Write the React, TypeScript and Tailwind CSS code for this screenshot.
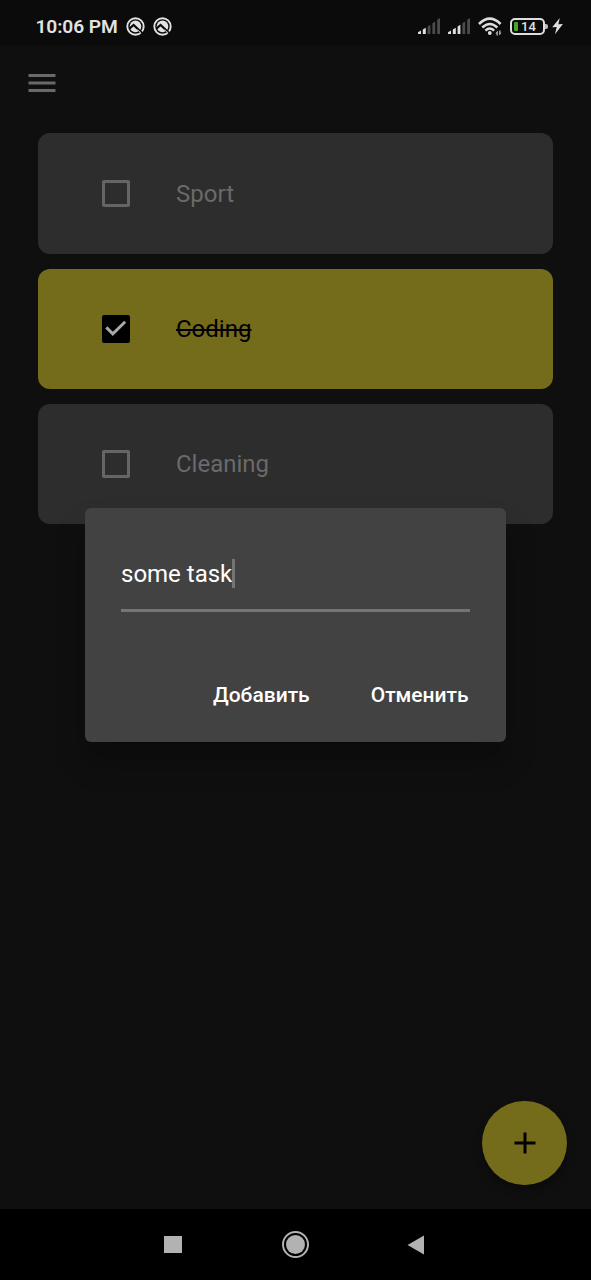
import React from 'react';

function RotationBadge() {
  return (
    <svg className="h-[19px] w-[19px]" viewBox="0 0 19 19" fill="none">
      <circle cx="9.5" cy="9.5" r="8.2" stroke="#e2e2e2" strokeWidth="1.9" />
      <circle cx="9.5" cy="9.4" r="5.8" fill="#e2e2e2" />
      <path d="M3.4 11.6L7.6 8L17.2 17" stroke="#0b0b0b" strokeWidth="2.2" />
      <path d="M11.4 12.6L15.2 16" stroke="#e2e2e2" strokeWidth="0.8" />
    </svg>
  );
}

function Signal({ active }: { active: number }) {
  const bars = [
    'M0 16V14.2L3 12.6V16Z',
    'M4.8 16V11.4L7.8 9.8V16Z',
    'M9.6 16V8.4L12.4 6.8V16Z',
    'M14.4 16V5.2L17.2 3.6V16Z',
    'M19.2 16V1.8L22 0V16Z',
  ];
  return (
    <svg className="h-4 w-[22px]" viewBox="0 0 22 16">
      {bars.map((d, i) => (
        <path key={d} d={d} fill={i < active ? '#dedede' : '#4b4b4b'} />
      ))}
    </svg>
  );
}

function Wifi() {
  return (
    <svg className="h-[19px] w-6" viewBox="0 0 24 19" fill="none">
      <path d="M1 7Q11.8 -3.6 22.6 7" stroke="#dedede" strokeWidth="2.6" />
      <path d="M4.3 10.5Q11.8 3.4 19.3 10.5" stroke="#dedede" strokeWidth="2.5" />
      <path d="M7.4 13.6Q11.8 9.6 16.2 13.6" stroke="#dedede" strokeWidth="2.4" />
      <circle cx="11.8" cy="16" r="1.9" fill="#dedede" />
      <path d="M17.4 16.4L19.8 13.6V18.6H18.5V16.4ZM23.6 15.8L21.2 18.6V13.6H22.5V15.8Z" fill="#bdbdbd" />
    </svg>
  );
}

function StatusBar() {
  return (
    <div className="flex h-[45px] shrink-0 items-center bg-[#0b0b0b] pt-[7px] pr-[28px] pl-[35.5px] text-[#e2e2e2]">
      <span className="w-[82.5px] pt-[2px] text-[19.2px] leading-6 font-semibold tracking-[-0.1px] whitespace-nowrap">10:06 PM</span>
      <div className="ml-2 flex gap-2">
        <RotationBadge />
        <RotationBadge />
      </div>
      <div className="ml-auto flex items-center">
        <Signal active={2} />
        <div className="w-2" />
        <Signal active={3} />
        <div className="w-2" />
        <Wifi />
        <div className="ml-2 flex h-[17px] w-[35px] items-center rounded-[5px] border-2 border-[#dedede] pl-[2px]">
          <div className="h-[9px] w-[4px] rounded-[1px] bg-[#45a51c]" />
          <span className="ml-[2px] w-[17px] text-center text-[13px] leading-[13px] font-medium">14</span>
        </div>
        <div className="h-[5px] w-[3px] rounded-r-[2px] bg-[#bdbdbd]" />
        <svg className="ml-[4px] h-[18px] w-[11px]" viewBox="0 0 11 18">
          <path d="M7.8 1L0.2 10.3L4.7 10.1L3 17.2L10.9 7L6.3 7.2Z" fill="#dedede" />
        </svg>
      </div>
    </div>
  );
}

function Task({ label, done = false }: { label: string; done?: boolean }) {
  return (
    <div
      className={
        done
          ? 'flex h-[120.3px] items-center rounded-xl bg-[#756c1b] pl-[64px] text-black'
          : 'flex h-[120.3px] items-center rounded-xl bg-[#2d2d2d] pl-[64px] text-[#6a6a6a]'
      }
    >
      {done ? (
        <svg className="h-[27.5px] w-[27.5px] rounded-[2px] bg-black" viewBox="0 0 28 28" fill="none">
          <path d="M4.4 12.6L11 19.2L23.6 6.9" stroke="#a8a8a8" strokeWidth="3" />
        </svg>
      ) : (
        <div className="h-[27.5px] w-[27.5px] rounded-[2px] border-[3px] border-[#656565]" />
      )}
      <span className={done ? 'ml-[46.5px] text-2xl line-through decoration-[1.5px]' : 'ml-[46.5px] text-2xl'}>{label}</span>
    </div>
  );
}

function TaskDialog() {
  return (
    <div className="absolute top-[508px] left-[85px] flex h-[234.4px] w-[421px] flex-col rounded-md bg-[#424242] px-9 pt-[50px] text-white shadow-[0_20px_28px_2px_rgba(0,0,0,0.22)]">
      <div className="flex h-[54px] items-start border-b-[3px] border-[#757575]">
        <span className="text-2xl leading-8">some task</span>
        <div className="mt-[1px] h-[29px] w-[3px] bg-[#757575]" />
      </div>
      <div className="mt-[68.5px] flex justify-end gap-[61px] pr-[1.4px] text-[21px] leading-7 font-medium">
        <button>Добавить</button>
        <button>Отменить</button>
      </div>
    </div>
  );
}

function NavigationBar() {
  return (
    <div className="flex h-[71px] shrink-0 items-center bg-black pl-[164px]">
      <div className="h-[17px] w-[18px] bg-[#b2b2b2]" />
      <div className="ml-[100px] flex h-[27px] w-[27px] items-center justify-center rounded-full border-2 border-[#b2b2b2]">
        <div className="h-[19px] w-[19px] rounded-full bg-[#b2b2b2]" />
      </div>
      <svg className="ml-[98px] h-5 w-[18px]" viewBox="0 0 18 20">
        <path d="M0.5 10L17 0.4V19.6Z" fill="#b2b2b2" />
      </svg>
    </div>
  );
}

export default function App() {
  return (
    <div className="relative flex h-[1280px] w-[591px] flex-col overflow-hidden bg-[#0f0f0f] font-['Roboto',sans-serif]">
      <StatusBar />
      <header className="flex h-[88.4px] shrink-0 items-start pt-[20.4px] pl-6">
        <svg className="h-9 w-9" viewBox="0 0 24 24" fill="#696969">
          <path d="M3 18h18v-2H3v2zm0-5h18v-2H3v2zm0-7v2h18V6H3z" />
        </svg>
      </header>
      <main className="flex flex-1 flex-col gap-[15px] px-[38px]">
        <Task label="Sport" />
        <Task label="Coding" done />
        <Task label="Cleaning" />
        <button className="mt-auto -mr-[14px] mb-6 flex h-[84.4px] w-[84.6px] items-center justify-center self-end rounded-full bg-[#756c1b] shadow-[0_5px_8px_rgba(0,0,0,0.35)]">
          <svg className="h-9 w-9" viewBox="0 0 24 24">
            <path d="M19 13h-6v6h-2v-6H5v-2h6V5h2v6h6v2z" />
          </svg>
        </button>
      </main>
      <NavigationBar />
      <TaskDialog />
    </div>
  );
}
